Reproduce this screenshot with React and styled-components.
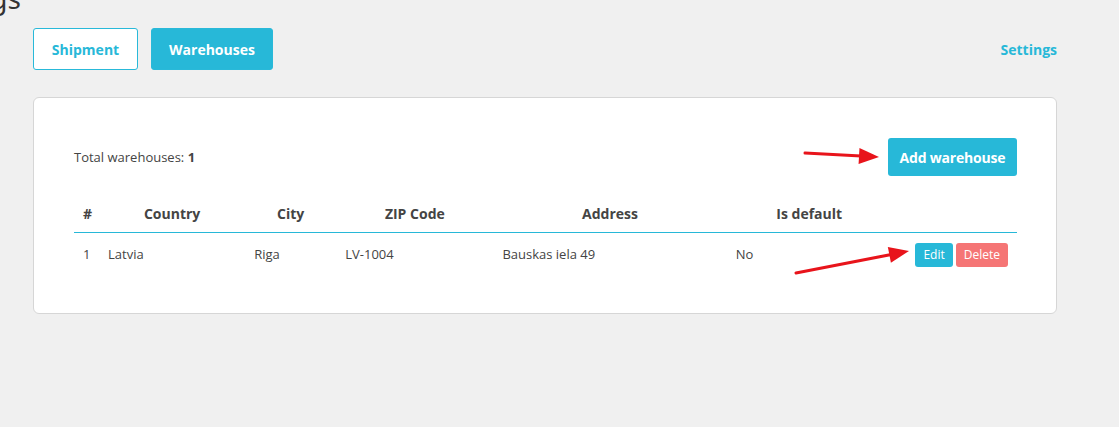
import React from "react";
import styled, { createGlobalStyle } from "styled-components";

const GlobalStyle = createGlobalStyle`
  html, body {
    margin: 0;
    padding: 0;
    background: #f0f0f0;
    font-family: "Open Sans", "Noto Sans", sans-serif;
    color: #444444;
    overflow: hidden;
  }
`;

const Page = styled.div`
  position: relative;
  width: 1119px;
  height: 427px;
  overflow: hidden;
`;

/* page is scrolled a little, only the tail of the heading shows */
const Title = styled.h1`
  width: 300px;
  margin: -22px 0 22px -279px;
  height: 28px;
  font-family: "Noto Sans", "Open Sans", sans-serif;
  font-size: 28px;
  font-weight: 400;
  line-height: 40px;
  text-align: right;
  color: #333333;
  white-space: nowrap;
`;

const Content = styled.div`
  width: 1024px;
  margin: 0 0 0 33px;
`;

const TabBar = styled.div`
  display: flex;
  align-items: center;
  gap: 13px;
`;

const Tab = styled.button`
  width: ${(p) => p.$width}px;
  height: 42px;
  padding: 0;
  border: 1px solid #29b9d9;
  border-radius: 3px;
  background: ${(p) => (p.$active ? "#27b8d8" : "#ffffff")};
  color: ${(p) => (p.$active ? "#ffffff" : "#27b8d8")};
  font-family: inherit;
  font-size: 14px;
  font-weight: 700;
  cursor: pointer;
`;

const SettingsLink = styled.a`
  margin-left: auto;
  color: #27b8d8;
  font-size: 14px;
  font-weight: 700;
  text-decoration: none;
`;

const Card = styled.div`
  margin-top: 27px;
  background: #ffffff;
  border: 1px solid #d6d6d6;
  border-radius: 6px;
  padding: 40px 39px 38px 40px;
`;

const TopRow = styled.div`
  display: flex;
  justify-content: space-between;
  align-items: center;
  font-size: 13px;
`;

const PrimaryButton = styled.button`
  width: 129px;
  height: 38px;
  padding: 0;
  border: none;
  border-radius: 3px;
  background: #27b8d8;
  color: #ffffff;
  font-family: inherit;
  font-size: 14px;
  font-weight: 700;
  letter-spacing: -0.2px;
  cursor: pointer;
`;

const Table = styled.table`
  width: 100%;
  margin-top: 20px;
  border-collapse: collapse;
  table-layout: fixed;
  font-size: 13px;
`;

const Th = styled.th`
  padding: 8px 9px;
  line-height: 20px;
  font-size: 14px;
  font-weight: 700;
  text-align: center;
  color: #444444;
  border-bottom: 1px solid #27b8d8;
`;

const Td = styled.td`
  padding: 8px 9px;
  line-height: 24px;
  text-align: ${(p) => (p.$right ? "right" : "left")};
  color: #444444;
`;

const SmallButton = styled.button`
  height: 24px;
  padding: 0 8px;
  margin-left: 3px;
  border: none;
  border-radius: 3px;
  background: ${(p) => (p.$danger ? "#f57575" : "#27b8d8")};
  color: #ffffff;
  font-family: inherit;
  font-size: 12px;
  vertical-align: middle;
  cursor: pointer;
`;

const Annotations = styled.svg`
  position: absolute;
  left: 0;
  top: 0;
  pointer-events: none;
`;

const columns = [
  { label: "#", width: 25 },
  { label: "Country", width: 146 },
  { label: "City", width: 91 },
  { label: "ZIP Code", width: 157 },
  { label: "Address", width: 233 },
  { label: "Is default", width: 165 },
  { label: "", width: 125 },
];

const warehouses = [
  { id: 1, country: "Latvia", city: "Riga", zip: "LV-1004", address: "Bauskas iela 49", isDefault: "No" },
];

const Arrow = ({ x1, y1, x2, y2 }) => {
  const angle = Math.atan2(y2 - y1, x2 - x1);
  const len = 20;
  const half = 8;
  const bx = x2 - len * Math.cos(angle);
  const by = y2 - len * Math.sin(angle);
  const px = -Math.sin(angle) * half;
  const py = Math.cos(angle) * half;
  return (
    <g fill="#e8141b" stroke="#e8141b">
      <line x1={x1} y1={y1} x2={bx + 2 * Math.cos(angle)} y2={by + 2 * Math.sin(angle)} strokeWidth="3" strokeLinecap="round" />
      <polygon points={`${x2},${y2} ${bx + px},${by + py} ${bx - px},${by - py}`} stroke="none" />
    </g>
  );
};

export default function App() {
  return (
    <Page>
      <GlobalStyle />
      <Title>Shipping settings</Title>
      <Content>
        <TabBar>
          <Tab $width={105}>Shipment</Tab>
          <Tab $width={122} $active>Warehouses</Tab>
          <SettingsLink href="#">Settings</SettingsLink>
        </TabBar>
        <Card>
          <TopRow>
            <span>
              Total warehouses: <b>{warehouses.length}</b>
            </span>
            <PrimaryButton>Add warehouse</PrimaryButton>
          </TopRow>
          <Table>
            <colgroup>
              {columns.map((c, i) => (
                <col key={i} style={{ width: c.width }} />
              ))}
            </colgroup>
            <thead>
              <tr>
                {columns.map((c, i) => (
                  <Th key={i}>{c.label}</Th>
                ))}
              </tr>
            </thead>
            <tbody>
              {warehouses.map((w) => (
                <tr key={w.id}>
                  <Td>{w.id}</Td>
                  <Td>{w.country}</Td>
                  <Td>{w.city}</Td>
                  <Td>{w.zip}</Td>
                  <Td>{w.address}</Td>
                  <Td>{w.isDefault}</Td>
                  <Td $right>
                    <SmallButton>Edit</SmallButton>
                    <SmallButton $danger>Delete</SmallButton>
                  </Td>
                </tr>
              ))}
            </tbody>
          </Table>
        </Card>
      </Content>
      <Annotations width="1119" height="427">
        <Arrow x1={805} y1={153} x2={879} y2={157} />
        <Arrow x1={796} y1={273} x2={909} y2={251} />
      </Annotations>
    </Page>
  );
}
